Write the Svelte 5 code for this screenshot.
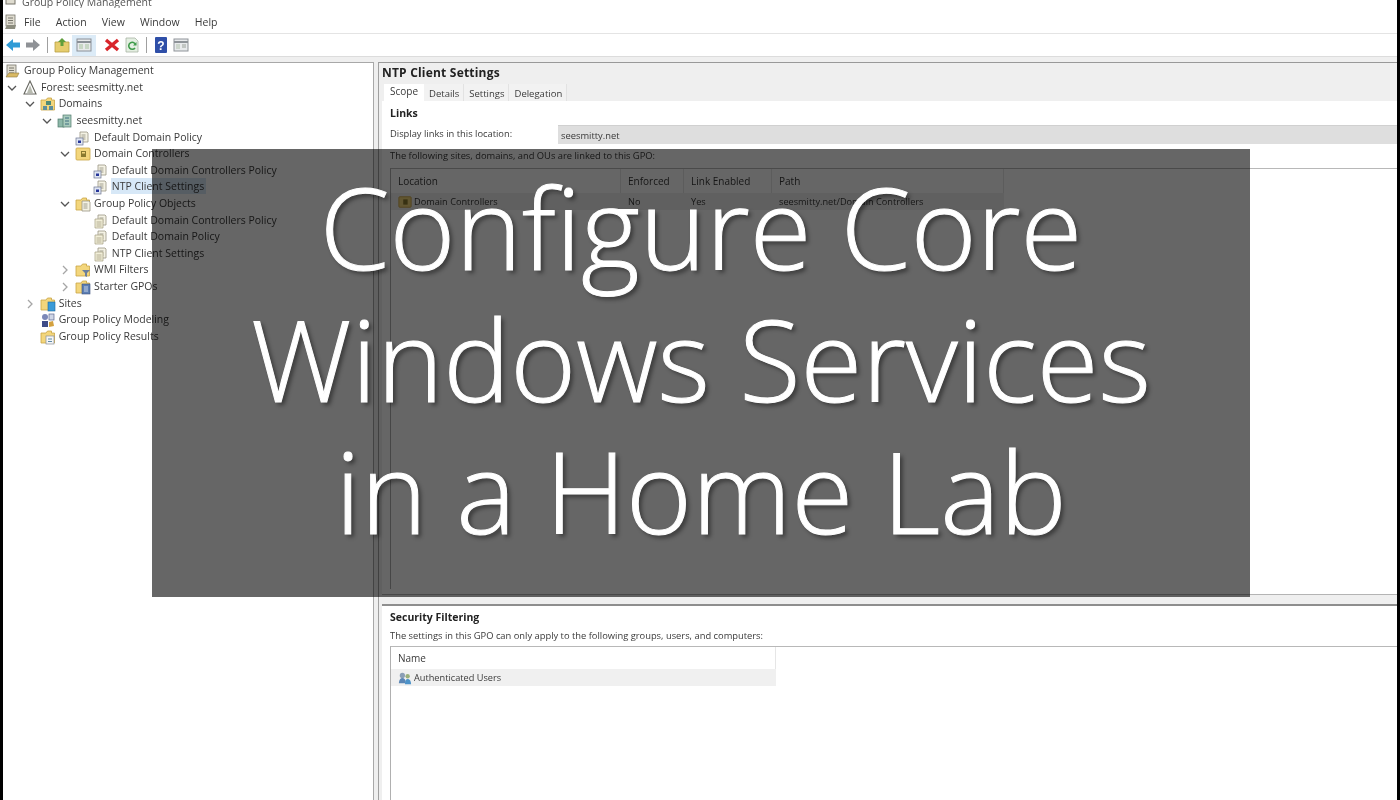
<script>
  const menus = ['File', 'Action', 'View', 'Window', 'Help'];
  const tree = [
    { label: 'Group Policy Management', level: 0, icon: 'root', noArrow: true, flush: true },
    { label: 'Forest: seesmitty.net', level: 0, icon: 'forest', open: true },
    { label: 'Domains', level: 1, icon: 'domains', open: true },
    { label: 'seesmitty.net', level: 2, icon: 'domain', open: true },
    { label: 'Default Domain Policy', level: 3, icon: 'link', leaf: true },
    { label: 'Domain Controllers', level: 3, icon: 'ou', open: true },
    { label: 'Default Domain Controllers Policy', level: 4, icon: 'link', leaf: true },
    { label: 'NTP Client Settings', level: 4, icon: 'link', leaf: true, selected: true },
    { label: 'Group Policy Objects', level: 3, icon: 'gpos', open: true },
    { label: 'Default Domain Controllers Policy', level: 4, icon: 'gpo', leaf: true },
    { label: 'Default Domain Policy', level: 4, icon: 'gpo', leaf: true },
    { label: 'NTP Client Settings', level: 4, icon: 'gpo', leaf: true },
    { label: 'WMI Filters', level: 3, icon: 'wmi' },
    { label: 'Starter GPOs', level: 3, icon: 'starter' },
    { label: 'Sites', level: 1, icon: 'sites' },
    { label: 'Group Policy Modeling', level: 1, icon: 'modeling', leaf: true },
    { label: 'Group Policy Results', level: 1, icon: 'results', leaf: true }
  ];
  const tabs = ['Scope', 'Details', 'Settings', 'Delegation'];
  const linkCols = [
    { name: 'Location', width: 230 },
    { name: 'Enforced', width: 63 },
    { name: 'Link Enabled', width: 88 },
    { name: 'Path', width: 232 }
  ];
</script>

{#snippet folder()}
  <path d="M1 4h5l1.500-2h4v2h3v10H1z" fill="#f3d67c" stroke="#c9a445" stroke-width=".8" />
{/snippet}

{#snippet doc(x, y)}
  <path d="M{x} {y}h7l1 1v9h-8z" fill="#f4f2e4" stroke="#9b9684" stroke-width=".8" />
  <path d="M{x + 1.500} {y + 3}h4M{x + 1.500} {y + 5}h4M{x + 1.500} {y + 7}h4" stroke="#8d8a78" stroke-width=".8" />
{/snippet}

{#snippet treeIcon(kind)}
  <svg class="ticon" viewBox="0 0 16 16" aria-hidden="true">
    {#if kind === 'root'}
      <rect x="2" y="2" width="9" height="11" fill="#dfdcd0" stroke="#77756b" stroke-width=".8" />
      <path d="M4 5h5M4 7.500h5M4 10h5" stroke="#77756b" />
      <path d="M1 14l3-4h10l-2 4z" fill="#d9b964" stroke="#8e7a41" stroke-width=".6" />
    {:else if kind === 'forest'}
      <path d="M8 1l6 13H2z" fill="#fff" stroke="#66665f" stroke-width="1.100" />
      <path d="M8 5l-3 8h6z" fill="#b8bbb0" />
    {:else if kind === 'domains'}
      {@render folder()}
      <rect x="6" y="5" width="5" height="4" fill="#4f8a78" />
      <rect x="3" y="10" width="4" height="4" fill="#5f8f9c" />
      <rect x="9" y="10" width="4" height="4" fill="#5f8f9c" />
    {:else if kind === 'domain'}
      <rect x="1" y="6" width="6" height="8" fill="#8cb7a8" stroke="#4e7a6c" stroke-width=".7" />
      <rect x="6" y="2" width="8" height="12" fill="#a9cbbd" stroke="#4e7a6c" stroke-width=".7" />
      <path d="M8 5h4M8 8h4M8 11h4" stroke="#3f6f80" />
    {:else if kind === 'link' || kind === 'gpo'}
      {@render doc(5, 2)}
      {#if kind === 'link'}
        <rect x="1" y="8" width="7" height="7" fill="#dfe5f2" stroke="#6d7590" stroke-width=".7" />
        <rect x="3" y="10.500" width="3" height="2.500" fill="#26369a" />
      {:else}
        <path d="M2 6h8v9H2z" fill="#f2efd9" stroke="#a59f83" stroke-width=".7" />
        <path d="M3.500 9h5M3.500 11h5M3.500 13h5" stroke="#a59f83" stroke-width=".8" />
      {/if}
    {:else if kind === 'ou'}
      <rect x="1" y="2" width="14" height="12" rx="1" fill="#f3d67c" stroke="#c9a445" stroke-width=".8" />
      <rect x="6" y="5" width="5" height="6" fill="#8a7a2e" />
      <rect x="7" y="6" width="3" height="1.500" fill="#f3d67c" />
    {:else if kind === 'gpos'}
      {@render folder()}
      {@render doc(7, 5)}
    {:else if kind === 'wmi'}
      {@render folder()}
      <path d="M7 8h8l-3 3v4l-2-1v-3z" fill="#6c7f9c" />
    {:else if kind === 'starter'}
      {@render folder()}
      <rect x="7" y="5" width="8" height="10" fill="#5d7fb4" stroke="#3c527c" stroke-width=".6" />
      <path d="M9 8h4M9 10h4M9 12h4" stroke="#dfe8f5" stroke-width=".8" />
    {:else if kind === 'sites'}
      {@render folder()}
      <rect x="8" y="6" width="7" height="9" fill="#3a9bd8" stroke="#1f6a9f" stroke-width=".6" />
    {:else if kind === 'modeling'}
      <circle cx="5" cy="5" r="3" fill="#7c88b8" />
      <rect x="2" y="9" width="6" height="6" fill="#3e4c88" />
      <rect x="9" y="2" width="5" height="6" fill="#cfd6e6" stroke="#5d6890" stroke-width=".7" />
      <path d="M9 10l4-1 1 5-5 1z" fill="#d3a13f" />
    {:else if kind === 'results'}
      {@render folder()}
      <rect x="6" y="7" width="8" height="8" fill="#f4f5f6" stroke="#8a9099" stroke-width=".7" />
      <path d="M8 10h4M8 12.500h4" stroke="#5d8aa8" />
    {/if}
  </svg>
{/snippet}

<div class="screen">
  <div class="window">
    <div class="titlebar">
      <svg class="ticon" viewBox="0 0 16 16" aria-hidden="true">
        <rect x="3" y="0" width="9" height="12" fill="#dfdcd0" stroke="#77756b" />
      </svg>
      <span>Group Policy Management</span>
    </div>

    <div class="menubar">
      <svg class="ticon" viewBox="0 0 16 16" aria-hidden="true">
        <rect x="3" y="1" width="9" height="11" fill="#dfdcd0" stroke="#77756b" stroke-width=".8" />
        <path d="M5 4h5M5 6.500h5M5 9h5" stroke="#77756b" />
        <path d="M2 15l2-4h9l-1 4z" fill="#8c8c7e" />
      </svg>
      {#each menus as item}
        <span class="menu">{item}</span>
      {/each}
    </div>

    <div class="toolbar">
      <button class="tool" aria-label="Back">
        <svg viewBox="0 0 16 16"><path d="M1 8l7-6v3.500h7v5H8V14z" fill="#2f9bd6" /></svg>
      </button>
      <button class="tool" aria-label="Forward">
        <svg viewBox="0 0 16 16"><path d="M15 8L8 2v3.500H1v5h7V14z" fill="#8f9296" /></svg>
      </button>
      <span class="sep"></span>
      <button class="tool" aria-label="Up">
        <svg viewBox="0 0 16 16">
          <path d="M1 5h14v10H1z" fill="#e6cd6e" stroke="#b79f45" stroke-width=".8" />
          <path d="M8 1l4 4H9.500v4h-3V5H4z" fill="#5f9e3c" />
        </svg>
      </button>
      <button class="tool active" aria-label="Show tree">
        <svg viewBox="0 0 16 16">
          <rect x="1" y="2" width="14" height="12" fill="#e8eaec" stroke="#8a9097" />
          <path d="M1 5h14" stroke="#8a9097" stroke-width="2" />
          <rect x="3" y="7" width="4" height="5" fill="#c7d6c5" />
          <rect x="9" y="7" width="4" height="5" fill="#c7d6c5" />
        </svg>
      </button>
      <span class="sep ghost"></span>
      <button class="tool" aria-label="Delete">
        <svg viewBox="0 0 16 16"><path d="M2 3l12 10M14 3L2 13" stroke="#d8252b" stroke-width="3.400" /></svg>
      </button>
      <button class="tool" aria-label="Refresh">
        <svg viewBox="0 0 16 16">
          <path d="M2 1h9l3 3v11H2z" fill="#e4efe2" stroke="#a8b4a4" stroke-width=".8" />
          <path d="M11 11a3.500 3.500 0 1 1 .5-3.500" fill="none" stroke="#3f9b4a" stroke-width="1.600" />
          <path d="M12.500 5v3.500H9z" fill="#3f9b4a" />
        </svg>
      </button>
      <span class="sep"></span>
      <button class="tool" aria-label="Help">
        <svg viewBox="0 0 16 16">
          <rect x="2" y="0" width="12" height="16" rx="1" fill="#2f4fa8" />
          <text x="8" y="12.500" class="qmark">?</text>
        </svg>
      </button>
      <button class="tool" aria-label="Show panel">
        <svg viewBox="0 0 16 16">
          <rect x="1" y="2" width="14" height="12" fill="#e8eaec" stroke="#8f9499" />
          <path d="M1 5h14" stroke="#8f9499" stroke-width="2" />
          <rect x="3" y="7" width="4" height="5" fill="#cdd6cc" />
          <path d="M9 8h4M9 10h4" stroke="#9aa19a" />
        </svg>
      </button>
    </div>

    <div class="panes">
      <nav class="tree">
        {#each tree as row}
          <div class="row" style="padding-left: {row.flush ? 2 : 4 + row.level * 17.700}px">
            {#if row.noArrow}
              <!-- root has no expander -->
            {:else if row.leaf}
              <span class="arrow"></span>
            {:else if row.open}
              <svg class="arrow" viewBox="0 0 10 10"><path d="M1 3l4 4 4-4" fill="none" stroke="#555" stroke-width="1.300" /></svg>
            {:else}
              <svg class="arrow" viewBox="0 0 10 10"><path d="M3 1l4 4-4 4" fill="none" stroke="#a6a6a6" stroke-width="1.300" /></svg>
            {/if}
            {@render treeIcon(row.icon)}
            <span class="label" class:selected={row.selected}>{row.label}</span>
          </div>
        {/each}
      </nav>

      <main class="detail">
        <h1>NTP Client Settings</h1>
        <div class="tabs">
          {#each tabs as tab, i}
            <span class="tab" class:current={i === 0}>{tab}</span>
          {/each}
        </div>

        <section class="links">
          <h2>Links</h2>
          <div class="location">
            <span class="loclabel">Display links in this location:</span>
            <span class="locvalue">seesmitty.net</span>
          </div>
          <p>The following sites, domains, and OUs are linked to this GPO:</p>
          <div class="listbox upper">
            <div class="thead">
              {#each linkCols as col}
                <span class="th" style="width: {col.width}px">{col.name}</span>
              {/each}
            </div>
            <div class="trow">
              <span class="td" style="width: {linkCols[0].width}px">
                <svg class="ticon small" viewBox="0 0 16 16" aria-hidden="true">
                  <rect x="1" y="2" width="14" height="12" rx="1" fill="#f3d67c" stroke="#c9a445" />
                  <rect x="6" y="5" width="5" height="6" fill="#8a7a2e" />
                </svg>
                Domain Controllers
              </span>
              <span class="td" style="width: {linkCols[1].width}px">No</span>
              <span class="td" style="width: {linkCols[2].width}px">Yes</span>
              <span class="td" style="width: {linkCols[3].width}px">seesmitty.net/Domain Controllers</span>
            </div>
          </div>
        </section>

        <section class="filtering">
          <h2>Security Filtering</h2>
          <p>The settings in this GPO can only apply to the following groups, users, and computers:</p>
          <div class="listbox lower">
            <div class="thead names"><span class="th">Name</span></div>
            <div class="trow names">
              <span class="td">
                <svg class="ticon small" viewBox="0 0 16 16" aria-hidden="true">
                  <circle cx="5" cy="5" r="3" fill="#8b9fb5" />
                  <path d="M1 14c0-4 2-6 4-6s4 2 4 6z" fill="#5b86b5" />
                  <circle cx="11" cy="6" r="2.500" fill="#9ab07c" />
                  <path d="M8 15c0-4 1-6 3-6s4 2 4 6z" fill="#4d93c9" />
                </svg>
                Authenticated Users
              </span>
            </div>
          </div>
        </section>
      </main>
    </div>
  </div>

  <div class="banner">
    <div class="banner-text">Configure Core<br />Windows Services<br />in a Home Lab</div>
  </div>
</div>

<style>
  :global(body) {
    margin: 0;
    background: #000;
  }

  .screen {
    position: relative;
    width: 1400px;
    height: 800px;
    overflow: hidden;
    background: #000;
    font-family: "Open Sans", "Noto Sans", sans-serif;
  }

  .window {
    display: flex;
    flex-direction: column;
    height: 800px;
    margin: 0 3px;
    background: #fff;
    color: #3a3a3a;
    font-size: 10.500px;
    filter: blur(0.6px);
    overflow: hidden;
  }

  .ticon {
    width: 16px;
    height: 16px;
    flex: none;
  }

  .ticon.small {
    width: 14px;
    height: 14px;
  }

  .titlebar {
    display: flex;
    align-items: flex-end;
    gap: 3px;
    height: 8px;
    overflow: hidden;
    color: #555;
  }

  .titlebar span {
    line-height: 14px;
    position: relative;
    top: 1px;
  }

  .menubar {
    display: flex;
    align-items: center;
    height: 25px;
    padding-top: 3px;
    box-sizing: border-box;
    flex: none;
  }

  .menu {
    margin-right: 15.200px;
  }

  .menu:first-of-type {
    margin-left: 5px;
  }

  .toolbar {
    display: flex;
    align-items: center;
    height: 22px;
    flex: none;
    border-top: 1px solid #e4e4e4;
    border-bottom: 1px solid #dcdcdc;
  }

  .tool {
    display: flex;
    align-items: center;
    justify-content: center;
    width: 20px;
    height: 21px;
    padding: 0;
    border: 0;
    background: none;
  }

  .tool svg {
    width: 16px;
    height: 16px;
  }

  .tool.active {
    width: 24px;
    background: #dcebf7;
  }

  .qmark {
    font: bold 12px "Liberation Sans", sans-serif;
    fill: #fff;
    text-anchor: middle;
  }

  .sep {
    width: 1px;
    height: 16px;
    margin: 0 4px;
    background: #a0a0a0;
  }

  .sep.ghost {
    background: none;
    margin: 0 3px;
    width: 0;
  }

  .panes {
    display: flex;
    flex: 1;
    min-height: 0;
    padding-top: 5px;
    background: #efefef;
    gap: 4px;
  }

  .tree {
    width: 370px;
    background: #fff;
    border-top: 1px solid #a8a8a8;
    border-right: 1px solid #a8a8a8;
    flex: none;
    font-size: 10.500px;
  }

  .row {
    display: flex;
    align-items: center;
    height: 16.600px;
    white-space: nowrap;
  }

  .arrow {
    width: 10px;
    height: 10px;
    margin-right: 5px;
    flex: none;
  }

  .label {
    margin: -2px 0 0 3px;
    padding-right: 2px;
    line-height: 16px;
  }

  .label.selected {
    background: #d7e8f7;
    margin-left: 2px;
    padding-left: 1px;
  }

  .detail {
    flex: 1;
    display: flex;
    flex-direction: column;
    min-width: 0;
    background: #efefef;
    border-top: 1px solid #999;
    border-left: 1px solid #a0a0a0;
    padding-left: 3px;
  }

  h1 {
    margin: 0;
    padding-top: 2px;
    font-size: 12px;
    line-height: 16px;
    font-weight: 700;
    color: #222;
    letter-spacing: 0.2px;
  }

  .tabs {
    display: flex;
    height: 18px;
    margin: 3px 0 0 2px;
  }

  .tab {
    padding: 2px 4px 0 5px;
    font-size: 9.500px;
    line-height: 15px;
    background: #f2f2f2;
    border-right: 1px solid #e2e2e2;
  }

  .tab.current {
    background: #fff;
    padding: 0 6px 0;
    font-size: 10px;
    border: 0;
  }

  section {
    background: #fff;
    padding-left: 8px;
  }

  h2 {
    margin: 0;
    font-size: 10.500px;
    line-height: 14px;
    font-weight: 700;
    color: #222;
  }

  p {
    margin: 0;
    font-size: 9.350px;
    line-height: 14px;
  }

  .links {
    height: 494px;
    padding-top: 5px;
    box-sizing: border-box;
    border-bottom: 1px solid #b4b4b4;
    flex: none;
  }

  .location {
    display: flex;
    align-items: center;
    height: 19px;
    margin-top: 5px;
    font-size: 9.350px;
  }

  .loclabel {
    width: 168px;
    flex: none;
    margin-top: -3px;
  }

  .locvalue {
    flex: 1;
    align-self: stretch;
    display: flex;
    align-items: center;
    padding-left: 3px;
    background: #dedede;
    border-top: 1px solid #d0d0d0;
  }

  .location + p {
    margin-top: 5px;
  }

  .listbox {
    border-top: 1px solid #b8b8b8;
    border-left: 1px solid #b0b0b0;
    font-size: 10px;
  }

  .listbox.upper {
    margin-top: 5px;
    height: 420px;
  }

  .thead {
    display: flex;
    height: 24px;
    align-items: center;
  }

  .th {
    box-sizing: border-box;
    padding-left: 7px;
    line-height: 24px;
    border-right: 1px solid #e6e6e6;
    flex: none;
  }

  .names .th {
    border: 0;
  }

  .trow {
    display: flex;
    width: 613px;
    height: 17px;
    align-items: center;
    background: #f0f0f0;
  }

  .td {
    box-sizing: border-box;
    padding-left: 7px;
    flex: none;
    white-space: nowrap;
    display: flex;
    align-items: center;
    gap: 2px;
    font-size: 9.200px;
  }

  .filtering {
    flex: 1;
    margin-top: 9px;
    border-top: 2px solid #8e8e8e;
    padding-top: 4px;
  }

  .filtering p {
    margin-top: 5px;
  }

  .listbox.lower {
    margin-top: 3px;
    height: 200px;
  }

  .names {
    width: 385px;
  }

  .thead.names {
    border-right: 1px solid #e6e6e6;
    height: 22px;
    width: 384px;
  }

  .banner {
    position: absolute;
    left: 152px;
    top: 149px;
    width: 1098px;
    height: 448px;
    box-sizing: border-box;
    padding-top: 12px;
    background: rgba(0, 0, 0, 0.6);
    text-align: center;
  }

  .banner-text {
    color: #fff;
    font-size: 112.500px;
    font-weight: 300;
    -webkit-text-stroke: 1px #fff;
    line-height: 132px;
    text-shadow: 3px 3px 4px rgba(0, 0, 0, 0.45);
  }
</style>
